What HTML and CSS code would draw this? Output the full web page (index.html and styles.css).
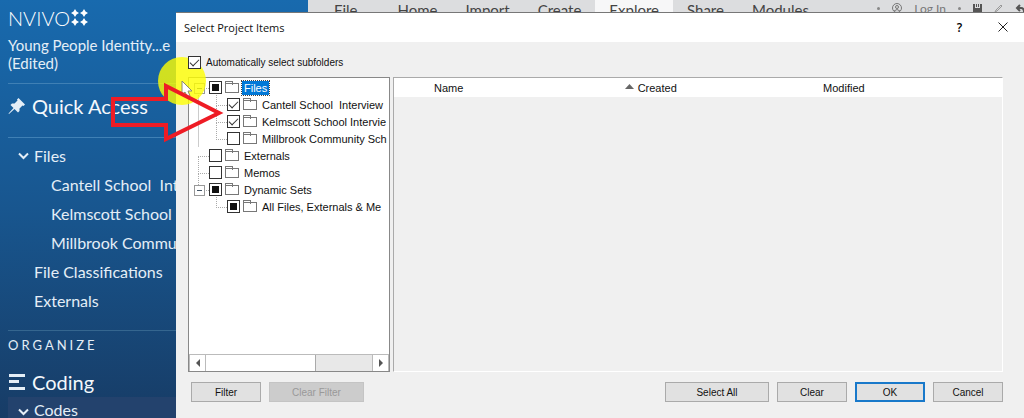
FILE: index.html
```html
<!DOCTYPE html>
<html lang="en">
<head>
  <meta charset="UTF-8">
  <meta name="viewport" content="width=device-width, initial-scale=1.0">
  <title>Select Project Items</title>
  <link rel="stylesheet" href="styles.css">
</head>
<body>

<div class="app">
  <aside class="sidebar">
    <div class="logo">
      <span>NVIVO</span>
      <svg width="18" height="18" viewBox="0 0 18 18" fill="#fff">
        <path id="star" d="M4 0L5.5 2.5L8 4L5.5 5.500L4 8L2.500 5.500L0 4L2.500 2.500Z"/>
        <use href="#star" x="9"/>
        <use href="#star" y="9"/>
        <use href="#star" x="9" y="9"/>
      </svg>
    </div>
    <div class="project">Young People Identity...e<br>(Edited)</div>

    <h2 class="section quick">
      <svg width="18" height="18" viewBox="0 0 18 18" fill="#e4eef7">
        <path d="M10.500 1L17 7.500L15.500 9L14.500 8.500L11.500 11.500L11.500 14L10 15.500L6.500 12L1 17L0.500 16.500L5.500 11L2.500 8L4 6.500L6.500 6.500L9.500 3.500L9 2.500Z"/>
      </svg>
      Quick Access
    </h2>
    <ul class="nav">
      <li>
        <svg class="chevron" width="11" height="8" viewBox="0 0 11 8" fill="none" stroke="#e4eef7" stroke-width="2"><path d="M1 1.500L5.500 6L10 1.500"/></svg>
        <a href="#">Files</a>
      </li>
      <li class="sub"><a href="#">Cantell School&nbsp; Interview</a></li>
      <li class="sub"><a href="#">Kelmscott School Interview</a></li>
      <li class="sub"><a href="#">Millbrook Community School</a></li>
      <li><a href="#">File Classifications</a></li>
      <li><a href="#">Externals</a></li>
    </ul>

    <div class="group-title">ORGANIZE</div>
    <h2 class="section coding">
      <svg width="18" height="16" viewBox="0 0 18 16" fill="#e4eef7">
        <path d="M1 0H17V3H1ZM1 6H11V9H1ZM1 13H17V16H1Z"/>
      </svg>
      Coding
    </h2>
    <ul class="nav">
      <li class="current">
        <svg class="chevron" width="11" height="8" viewBox="0 0 11 8" fill="none" stroke="#e4eef7" stroke-width="2"><path d="M1 1.500L5.500 6L10 1.500"/></svg>
        <a href="#">Codes</a>
      </li>
    </ul>
  </aside>

  <header class="ribbon">
    <nav class="tabs">
      <a class="file" href="#">File</a>
      <a href="#">Home</a>
      <a href="#">Import</a>
      <a href="#">Create</a>
      <a class="active" href="#">Explore</a>
      <a href="#">Share</a>
      <a href="#">Modules</a>
    </nav>
    <div class="account">
      <span class="dot"></span>
      <svg width="10" height="10" viewBox="0 0 10 10" fill="none" stroke="#777"><circle cx="5" cy="5" r="4.500"/><circle cx="5" cy="4" r="1.500"/><path d="M2 8Q5 5 8 8"/></svg>
      <a href="#">Log In</a>
      <span class="dot"></span>
      <svg width="9" height="9" viewBox="0 0 9 9"><path fill="#555" d="M0 0H2V4H7V0H9V9H0ZM3 0H4V3H3ZM5 0H6V3H5Z"/></svg>
      <svg width="9" height="9" viewBox="0 0 9 9" fill="none" stroke="#999"><path d="M1 8L2 6L7 1L8 2L3 7Z"/></svg>
      <svg width="9" height="9" viewBox="0 0 9 9" fill="none" stroke="#555" stroke-width="2"><path d="M5 1L2 4L5 7M2 4H6Q9 4 9 8"/></svg>
    </div>
  </header>

  <section class="dialog" role="dialog" aria-labelledby="dialog-title">
    <div class="titlebar">
      <h1 id="dialog-title">Select Project Items</h1>
      <button type="button" class="help">?</button>
      <button type="button" class="close" aria-label="Close">
        <svg width="10" height="10" viewBox="0 0 10 10" stroke="#222"><path d="M0.500 0.500L9.500 9.500M9.500 0.500L0.500 9.500"/></svg>
      </button>
    </div>

    <form class="content">
      <div class="auto">
        <input type="checkbox" id="auto" checked>
        <label for="auto">Automatically select subfolders</label>
      </div>

      <div class="panes">
        <div class="tree">
          <ul class="items">
            <li class="root open"><input type="checkbox" class="mixed" id="files"><i class="folder"></i><label class="selected" for="files">Files</label></li>
            <li class="child"><input type="checkbox" id="cantell" checked><i class="folder"></i><label for="cantell">Cantell School&nbsp; Interview</label></li>
            <li class="child"><input type="checkbox" id="kelmscott" checked><i class="folder"></i><label for="kelmscott">Kelmscott School Intervie</label></li>
            <li class="child"><input type="checkbox" id="millbrook"><i class="folder"></i><label for="millbrook">Millbrook Community Sch</label></li>
            <li class="root"><input type="checkbox" id="externals"><i class="folder"></i><label for="externals">Externals</label></li>
            <li class="root"><input type="checkbox" id="memos"><i class="folder"></i><label for="memos">Memos</label></li>
            <li class="root open last"><input type="checkbox" class="mixed" id="sets"><i class="folder"></i><label for="sets">Dynamic Sets</label></li>
            <li class="child last"><input type="checkbox" class="mixed" id="all"><i class="folder"></i><label for="all">All Files, Externals &amp; Me</label></li>
          </ul>
          <div class="scrollbar">
            <button type="button" aria-label="Scroll left"><svg width="4" height="8" viewBox="0 0 4 8" fill="#555"><path d="M4 0V8L0 4Z"/></svg></button>
            <div class="track"><div class="thumb"></div></div>
            <button type="button" aria-label="Scroll right"><svg width="4" height="8" viewBox="0 0 4 8" fill="#555"><path d="M0 0V8L4 4Z"/></svg></button>
          </div>
        </div>

        <div class="list">
          <table>
            <thead>
              <tr>
                <th class="name">Name</th>
                <th class="created"><svg width="9" height="5" viewBox="0 0 9 5" fill="#666"><path d="M0 5L4.500 0L9 5Z"/></svg>Created</th>
                <th>Modified</th>
              </tr>
            </thead>
          </table>
        </div>
      </div>

      <div class="actions">
        <button type="button">Filter</button>
        <button type="button" class="wide" disabled>Clear Filter</button>
        <span class="spacer"></span>
        <button type="button" class="wider">Select All</button>
        <button type="button">Clear</button>
        <button type="submit" class="primary">OK</button>
        <button type="button">Cancel</button>
      </div>
    </form>
  </section>

  <!-- pointer highlight and arrow -->
  <svg class="marker" width="240" height="160" viewBox="0 0 240 160">
    <circle cx="182" cy="81" r="24" fill="#ffff00" fill-opacity="0.8"/>
    <path d="M182 81V94.500L185 92L187.500 97L190 96L188 91H192Z" fill="#fff" stroke="#8a8a70" stroke-width="1"/>
    <path d="M113 99H166V86L219 113L166 139V125H113Z" fill="none" stroke="#ee1c25" stroke-width="4"/>
  </svg>
</div>

</body>
</html>
```

FILE: styles.css
```css
* {
  box-sizing: border-box;
}
body {
  margin: 0;
  font-family: Lato, sans-serif;
}
a {
  color: inherit;
  text-decoration: none;
}
ul {
  list-style: none;
  margin: 0;
  padding: 0;
}
.app {
  position: relative;
  display: grid;
  grid-template-columns: 308px 1fr;
  height: 100vh;
  overflow: hidden;
  background-color: #f0f0f0;
}

/* Sidebar */
.sidebar {
  padding: 8px 0 0 8px;
  overflow: hidden;
  white-space: nowrap;
  color: #e4eef7;
  background: linear-gradient(#186aae, #18568f 50%, #173c66);
}
.logo {
  display: flex;
  align-items: center;
  gap: 1px;
  height: 20px;
  font-size: 20px;
  font-weight: 300;
  color: #fff;
}
.project {
  padding: 8px 0 11px;
  font-size: 15px;
  line-height: 18px;
  border-bottom: 1px solid #3f80b5;
}
.section {
  display: flex;
  align-items: center;
  gap: 6px;
  margin: 0;
  font-size: 20px;
  font-weight: 400;
  color: #f4f8fc;
}
.quick {
  height: 54px;
  padding-bottom: 10px;
  border-bottom: 1px solid #3f80b5;
}
.nav {
  font-size: 16px;
  line-height: 29px;
}
.quick + .nav {
  padding: 3px 0 15px;
  border-bottom: 1px solid #35668f;
}
.nav li {
  position: relative;
  padding-left: 26px;
}
.nav .sub {
  padding-left: 43px;
}
.chevron {
  position: absolute;
  left: 10px;
  top: 11px;
}
.group-title {
  font-size: 13px;
  line-height: 28px;
  letter-spacing: 3px;
}
.coding {
  height: 38px;
  padding-top: 8px;
}
.nav .current {
  line-height: 26px;
  background-color: #23426d;
}

/* Ribbon */
.ribbon {
  display: flex;
  justify-content: space-between;
  height: 20px;
  overflow: hidden;
  background-color: #dcdddf;
  color: #444;
}
.tabs {
  display: flex;
  font-size: 15px;
  line-height: 20px;
}
.tabs a {
  padding: 0 14px;
}
.tabs .file {
  padding: 0 26px;
}
.tabs .active {
  background-color: #f7f7f8;
}
.account {
  display: flex;
  align-items: center;
  gap: 12px;
  height: 16px;
  font-size: 12px;
  color: #777;
}
.dot {
  width: 3px;
  height: 3px;
  border-radius: 50%;
  background-color: #888;
}

/* Dialog */
.dialog {
  position: absolute;
  top: 12px;
  right: 0;
  bottom: 0;
  left: 176px;
  display: flex;
  flex-direction: column;
  border-top: 1px solid #777;
  background-color: #f0f0f0;
  color: #111;
}
.titlebar {
  display: flex;
  align-items: center;
  height: 29px;
  padding-left: 8px;
  background-color: #fff;
}
.titlebar h1 {
  flex: 1;
  margin: 0;
  font: 400 11px "Open Sans", sans-serif;
}
.titlebar button {
  width: 43px;
  padding: 0;
  border: none;
  background: none;
  font: 600 12px "Open Sans", sans-serif;
}
.content {
  display: flex;
  flex: 1;
  flex-direction: column;
  padding: 13px 21px 16px 12px;
  font: 11px "Liberation Sans", Arial, sans-serif;
}
.auto {
  display: flex;
  align-items: center;
  gap: 5px;
  height: 14px;
  font-size: 10px;
}
input[type="checkbox"] {
  appearance: none;
  position: relative;
  z-index: 1;
  flex: none;
  display: grid;
  place-items: center;
  width: 13px;
  height: 13px;
  margin: 0;
  border: 1px solid #333;
  background-color: #fff;
}
input:checked::before {
  content: "";
  width: 8px;
  height: 4px;
  margin-bottom: 2px;
  border: solid #333;
  border-width: 0 0 1px 1px;
  transform: rotate(-45deg);
}
input.mixed::before {
  content: "";
  width: 7px;
  height: 7px;
  background-color: #111;
}
.panes {
  display: grid;
  grid-template-columns: 202px 1fr;
  gap: 3px;
  flex: 1;
  margin-top: 8px;
}
.tree {
  display: flex;
  flex-direction: column;
  border: 1px solid #888;
  background-color: #fff;
}
.items {
  flex: 1;
  padding-top: 1px;
  overflow: hidden;
  white-space: nowrap;
}
.items li {
  position: relative;
  display: flex;
  align-items: center;
  height: 17px;
  padding-left: 20px;
}
.items .child {
  padding-left: 38px;
}

/* dotted connector lines */
.items li::before {
  content: "";
  position: absolute;
  top: 9px;
  left: 9px;
  width: 10px;
  height: 17px;
  border: dotted #aaa;
  border-width: 1px 0 0 1px;
}
.items .child::before {
  top: -8px;
  left: 27px;
  border-width: 0 0 1px 1px;
}
.items .child:not(.last) {
  background: linear-gradient(#ccc, #ccc) 9px 0 / 1px 100% no-repeat;
}
.items .root.last::before {
  top: -8px;
  border-width: 0 0 1px 1px;
}
.items .open::after {
  content: "";
  position: absolute;
  top: 4px;
  left: 5px;
  width: 9px;
  height: 9px;
  border: 1px solid #999;
  background: linear-gradient(#456, #456) center / 5px 1px no-repeat #fff;
}
.folder {
  position: relative;
  width: 14px;
  height: 10px;
  margin: 1px 3px 0;
  border: 1px solid #777;
}
.folder::before {
  content: "";
  position: absolute;
  top: -3px;
  left: -1px;
  width: 6px;
  height: 3px;
  border: 1px solid #777;
  border-bottom: none;
}
.items label {
  padding: 1px 2px;
}
.items .selected {
  background-color: #0078d7;
  color: #fff;
  outline: 1px dotted #444;
}
.scrollbar {
  display: flex;
  height: 17px;
  border-top: 1px solid #bbb;
}
.scrollbar button {
  display: grid;
  place-items: center;
  width: 17px;
  padding: 0;
  border: 1px solid #bbb;
  border-width: 0 1px;
  background-color: #fff;
}
.track {
  flex: 1;
  background-color: #e8e8e8;
}
.thumb {
  width: 66%;
  height: 100%;
  border-right: 1px solid #aaa;
  background-color: #fff;
}
.list {
  border: 1px solid #fff;
  border-top-color: #aaa;
  border-left-color: #aaa;
}
table {
  width: 100%;
  table-layout: fixed;
  border-collapse: collapse;
  background-color: #fff;
}
th {
  height: 19px;
  padding: 0 0 0 40px;
  text-align: left;
  font-weight: 400;
}
th svg {
  margin-right: 4px;
  vertical-align: 3px;
}
.name {
  width: 33%;
}
.created {
  width: 31%;
  padding-left: 30px;
}
.actions {
  display: flex;
  gap: 8px;
  padding: 10px 0 0 3px;
}
.actions button {
  width: 70px;
  height: 20px;
  padding: 0;
  border: 1px solid #aaa;
  background-color: #e1e1e1;
  color: #111;
  font: inherit;
  font-size: 10px;
}
.actions .wide {
  width: 95px;
}
.actions .wider {
  width: 104px;
}
.actions button:disabled {
  border-color: #c4c4c4;
  background-color: #ccc;
  color: #999;
}
.actions .primary {
  border: 2px solid #1979ca;
}
.spacer {
  flex: 1;
}

.marker {
  position: absolute;
  top: 0;
  left: 0;
  pointer-events: none;
}
```
